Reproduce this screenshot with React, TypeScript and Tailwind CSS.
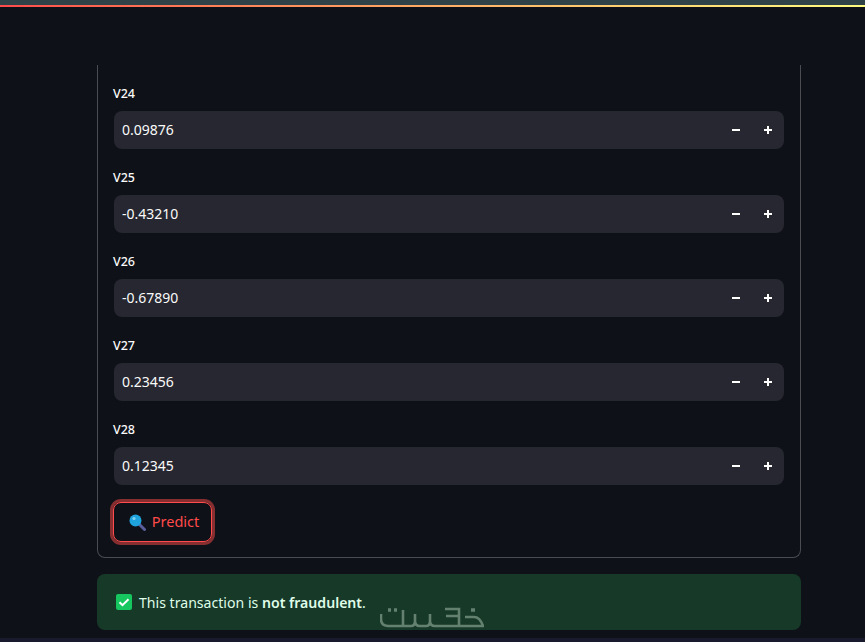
import React from 'react';

const fields = [
  { label: 'V24', value: '0.09876' },
  { label: 'V25', value: '-0.43210' },
  { label: 'V26', value: '-0.67890' },
  { label: 'V27', value: '0.23456' },
  { label: 'V28', value: '0.12345' },
];

function NumberField({ label, value }: { label: string; value: string }) {
  return (
    <div className="h-[84px] pt-[19px]">
      <div className="h-[19px] text-[12.5px] leading-[19px] font-medium text-[#fafafa]">{label}</div>
      <div className="mt-[8px] ml-[1px] flex h-[38px] w-[670px] items-center rounded-[8px] bg-[#262730] pl-[8px] text-[14px] font-[450] text-[#fafafa]">
        <span className="mb-[1px] flex-1">{value}</span>
        <div className="flex w-[64px] items-center">
          <span className="flex w-[32px] justify-center">
            <span className="h-[2px] w-[8px] bg-white" />
          </span>
          <span className="relative flex h-[8px] w-[32px] justify-center">
            <span className="absolute top-[3px] h-[2px] w-[8px] bg-white" />
            <span className="h-[8px] w-[2px] bg-white" />
          </span>
        </div>
      </div>
    </div>
  );
}

function Watermark() {
  return (
    <svg className="absolute left-[380px] top-[607px]" width="106" height="22" viewBox="0 0 106 22" fill="none" stroke="#64806f" strokeWidth="2.6">
      <path d="M1 7v5q0 7 7 7h15V3M23 19h8q4 0 4-5V7M35 14q0 5 5 5h6q4 0 4-5V7M50 14q0 5 5 5h24V2H65M66 9h13M79 19h25M85 10h9q6 0 9 9" />
      <path d="M8 3h3M14 3h3M91 3h4" strokeWidth="3.4" />
    </svg>
  );
}

export default function App() {
  return (
    <div className="relative flex h-[642px] w-[865px] flex-col overflow-hidden bg-[#0e1117] font-['Noto_Sans',sans-serif]">
      <div className="h-[5px] shrink-0 bg-[#2e4247]" />
      <div className="h-[2px] shrink-0 bg-gradient-to-r from-[#ff4b4b] to-[#fffd80]" />

      <div className="mt-[58px] ml-[97px] h-[493px] w-[704px] shrink-0 rounded-b-[8px] border border-t-0 border-[#4a4c52] pl-[15px]">
        {fields.map((field) => (
          <NumberField key={field.label} label={field.label} value={field.value} />
        ))}
        <button className="mt-[17px] flex h-[40px] w-[99px] items-center justify-center gap-[6px] rounded-[8px] border-[1.5px] border-[#ff4b4b] pl-[3px] text-[14.5px] text-[#ff4b4b] shadow-[0_0_0_3px_rgba(255,75,75,0.5)]">
          <svg width="17" height="17" viewBox="0 0 17 17">
            <path d="M10 10l5.5 5.5" stroke="#5a5f9c" strokeWidth="3" strokeLinecap="round" />
            <circle cx="6.5" cy="6.5" r="6" fill="#1fa3dc" />
            <circle cx="5" cy="4.5" r="1.6" fill="#7fd0f0" />
          </svg>
          <span className="mb-[1px]">Predict</span>
        </button>
      </div>

      <div className="mt-[16px] ml-[97px] flex h-[56px] w-[704px] shrink-0 items-center rounded-[8px] bg-[#173928] pl-[19px] text-[14.1px] text-[#dffde9]">
        <svg className="mr-[7px]" width="16" height="16" viewBox="0 0 16 16">
          <rect width="16" height="16" rx="2" fill="#16c65f" />
          <path d="M3.5 8.2l3 3 6-6" fill="none" stroke="white" strokeWidth="2" />
        </svg>
        <span className="mt-[1px]">
          This transaction is <strong className="font-semibold">not fraudulent</strong>.
        </span>
      </div>

      <Watermark />
      <div className="mt-auto h-[4px] shrink-0 bg-[#1a1a2e]" />
    </div>
  );
}
